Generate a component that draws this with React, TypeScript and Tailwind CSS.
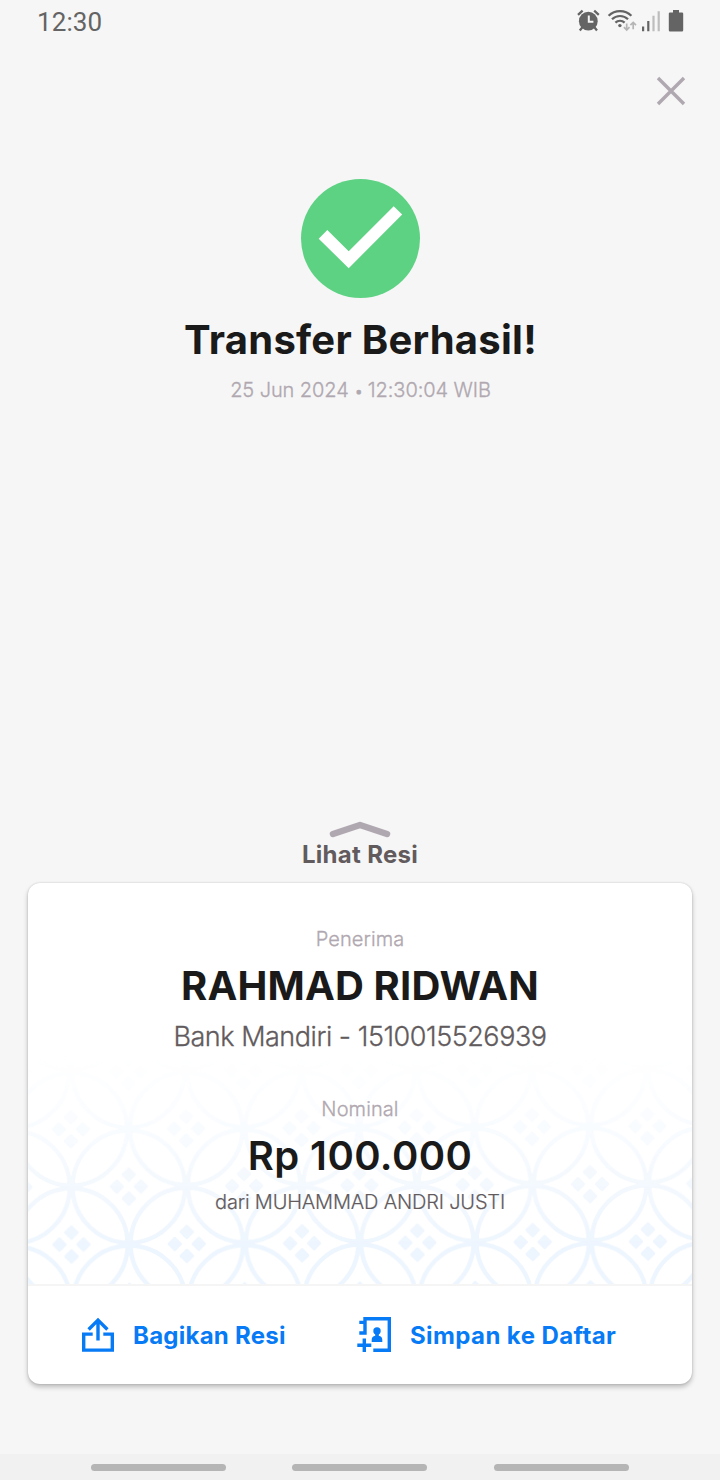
import type { ReactNode } from 'react';

interface TextRowProps {
  className: string;
  children: ReactNode;
}

const StatusIcons = () => (
  <svg className="h-8 w-[108px]" viewBox="577 0 108 32" fill="none">
    {/* Alarm */}
    <circle cx="588.3" cy="21.2" r="9.4" fill="#646464" />
    <path d="M588.8 15.5v6.3h4.6" stroke="#f5f5f5" strokeWidth="2" />
    <path
      d="M578 14.8l4.6-4.2M598.8 14.8l-4.6-4.2M582.6 27l-2.8 3.4M594.2 27l2.8 3.4"
      stroke="#646464"
      strokeWidth="2.3"
    />

    {/* Wifi */}
    <g stroke="#646464" strokeWidth="2.2">
      <path d="M608.6 15.8a16.4 16.4 0 0 1 22.8 0" />
      <path d="M612 19.3a11.4 11.4 0 0 1 16 0" />
      <path d="M615.4 22.6a6.6 6.6 0 0 1 9.2 0" />
    </g>
    <circle cx="619.9" cy="25.6" r="1.7" fill="#646464" />
    <g stroke="#b5b5b5" strokeWidth="1.7">
      <path d="M626.7 23.5v6.3M623.9 27.2l2.8 2.8 2.8-2.8" />
      <path d="M633.2 29.2v-6.6M630.4 25.2l2.8-2.8 2.8 2.8" />
    </g>

    {/* Signal */}
    <path d="M642 26.5h2.2v4.8H642zM647.2 21h2.2v10.3h-2.2z" fill="#646464" />
    <path d="M652.4 15.8h2.2v15.5h-2.2zM657.6 11.2h2.2v20.1h-2.2z" fill="#bdbdbd" />

    {/* Battery */}
    <path
      d="M673 10h6v2.4h3a1.2 1.2 0 0 1 1.2 1.2v16.6a1.2 1.2 0 0 1-1.2 1.2h-12a1.2 1.2 0 0 1-1.2-1.2V13.6a1.2 1.2 0 0 1 1.2-1.2h3z"
      fill="#646464"
    />
  </svg>
);

const CloseIcon = () => (
  <svg className="size-8" viewBox="0 0 32 32" stroke="#b0a8b0" strokeWidth="3.4">
    <path d="M3 3l26 26M29 3L3 29" />
  </svg>
);

const SuccessIcon = () => (
  <svg className="size-[119px]" viewBox="0 0 119 119">
    <circle cx="59.5" cy="59.5" r="59.5" fill="#5dd283" />
    <path d="M17.7 59.7l8.6-8.7 21.4 21.2L92.7 27.2l8.5 8.3-53.5 53.7z" fill="#fff" />
  </svg>
);

const ShareIcon = () => (
  <svg className="size-9" viewBox="0 0 36 36" fill="none" stroke="#077bf5" strokeWidth="3.4">
    <path d="M12.7 17.1H3.7v16h28.6v-16h-9" />
    <path d="M18 23.5V2.5M8.6 12.5L18 3.1l9.4 9.4" />
  </svg>
);

const ContactIcon = () => (
  <svg className="size-9" viewBox="0 0 36 36" fill="none" stroke="#077bf5" strokeWidth="3.4">
    <path d="M2.3 5.4h6M2.3 16h5.7M8 17.7V1.7h24.3v31.6H16.3" />
    <path d="M.3 28.2h14M7.3 21.5v13.4" />
    <g fill="#077bf5" stroke="none">
      <circle cx="20" cy="14" r="3.7" />
      <path d="M18.2 16.5h3.6v2.2c2.2.4 3.5 1.8 3.5 4V25H14.7v-2.3c0-2.2 1.3-3.6 3.5-4z" />
    </g>
  </svg>
);

/** Interlaced circles that fade out towards the top of the card */
const BatikPattern = () => (
  <svg className="absolute bottom-0 left-0 h-[230px] w-full" viewBox="28 1054 664 230">
    <defs>
      <pattern
        id="batik"
        width="115.3"
        height="115.3"
        patternUnits="userSpaceOnUse"
        patternTransform="translate(71.5 1244.5) rotate(-0.3)"
      >
        <g fill="none" stroke="#edf5fe" strokeWidth="4.4">
          <circle cx="57.65" cy="57.65" r="56.2" />
          <circle cx="0" cy="0" r="56.2" />
          <circle cx="115.3" cy="0" r="56.2" />
          <circle cx="0" cy="115.3" r="56.2" />
          <circle cx="115.3" cy="115.3" r="56.2" />
        </g>
        <g fill="#edf5fe">
          {[
            [57.65, 57.65],
            [0, 0],
            [115.3, 0],
            [0, 115.3],
            [115.3, 115.3],
          ].map(([x, y]) => (
            <g key={`${x}-${y}`} transform={`translate(${x} ${y}) rotate(45)`}>
              <rect x="-14" y="-14" width="11" height="11" rx="1.5" />
              <rect x="3" y="-14" width="11" height="11" rx="1.5" />
              <rect x="-14" y="3" width="11" height="11" rx="1.5" />
              <rect x="3" y="3" width="11" height="11" rx="1.5" />
            </g>
          ))}
        </g>
      </pattern>
      <linearGradient id="fade" x1="0" y1="0" x2="0" y2="1">
        <stop offset="0" stopColor="#fff" stopOpacity="0" />
        <stop offset="0.33" stopColor="#fff" stopOpacity="0.34" />
        <stop offset="0.85" stopColor="#fff" />
      </linearGradient>
      <mask id="fadeMask" className="[mask-type:alpha]">
        <rect x="28" y="1054" width="664" height="230" fill="url(#fade)" />
      </mask>
    </defs>
    <rect x="28" y="1054" width="664" height="230" fill="url(#batik)" mask="url(#fadeMask)" />
  </svg>
);

const TextRow = ({ className, children }: TextRowProps) => (
  <p className={`whitespace-nowrap text-center ${className}`}>{children}</p>
);

const App = () => {
  return (
    <div className="flex h-[1480px] w-[720px] flex-col overflow-hidden bg-[#f6f6f6] font-['Inter',sans-serif]">
      {/* Status bar */}
      <div className="flex h-11 items-start justify-between pl-[37px] pr-[35px]">
        <span className="font-['Roboto',sans-serif] text-[26px] leading-[44px] tracking-[0.1px] text-[#646464]">
          12:30
        </span>
        <StatusIcons />
      </div>

      <div className="flex h-[135px] justify-end pr-[33px] pt-[31px]">
        <button className="size-8" aria-label="Tutup">
          <CloseIcon />
        </button>
      </div>

      {/* Result */}
      <div className="flex flex-col items-center pl-px">
        <SuccessIcon />
        <h1 className="mt-[18px] whitespace-nowrap text-[40px] font-bold leading-[48px] tracking-[0.25px] text-[#1a1a1a]">
          Transfer Berhasil!
        </h1>
        <TextRow className="mt-[14px] text-[20px] font-light leading-6 tracking-[-0.08px] text-[#b0a8b0] [-webkit-text-stroke:0.3px]">
          25 Jun 2024 <span className="inline-block w-2 text-center text-[16px] leading-none">•</span> 12:30:04 WIB
        </TextRow>
      </div>

      {/* Receipt handle */}
      <div className="mt-auto flex flex-col items-center">
        <svg className="h-5 w-16" viewBox="0 0 64 20" fill="none">
          <path
            d="M5 15L32 6l27 9"
            stroke="#b0a8b0"
            strokeWidth="6.5"
            strokeLinecap="round"
            strokeLinejoin="round"
          />
        </svg>
        <TextRow className="mt-[2px] text-[24px] font-bold leading-7 tracking-[0.3px] text-[#625b5d]">Lihat Resi</TextRow>
      </div>

      {/* Card */}
      <div className="mx-7 mb-[70px] mt-[14px] h-[501px] shrink-0 overflow-hidden rounded-xl bg-white shadow-[0_3px_5px_rgba(0,0,0,0.24),0_0_2px_rgba(0,0,0,0.18)]">
        <div className="relative h-[401px]">
          <BatikPattern />
          <div className="relative pt-[44px]">
            <TextRow className="text-[20px] font-light leading-6 tracking-[0.1px] text-[#b0a8b0] [-webkit-text-stroke:0.3px]">
              Penerima
            </TextRow>
            <TextRow className="mt-[11px] text-[40px] font-bold leading-[48px] tracking-[0.15px] text-[#1a1a1a]">
              RAHMAD RIDWAN
            </TextRow>
            <TextRow className="mt-[11px] text-[27px] font-light leading-8 tracking-[-0.47px] text-[#625b5d] [-webkit-text-stroke:0.3px]">
              Bank Mandiri - 1510015526939
            </TextRow>
            <TextRow className="mt-[44px] text-[20px] font-light leading-6 tracking-[0.1px] text-[#b0a8b0] [-webkit-text-stroke:0.3px]">
              Nominal
            </TextRow>
            <TextRow className="mt-[11px] text-[40px] font-semibold leading-[48px] tracking-[0.4px] text-[#1a1a1a]">
              Rp 100.000
            </TextRow>
            <TextRow className="mt-[10px] text-[20px] font-light leading-6 tracking-[-0.18px] text-[#625b5d] [-webkit-text-stroke:0.2px]">
              dari MUHAMMAD ANDRI JUSTI
            </TextRow>
          </div>
        </div>
        <div className="flex h-[100px] items-center border-t-2 border-[#f5f5f5] pl-[52px] text-[24px] font-bold text-[#077bf5]">
          <button className="flex w-[277px] items-center gap-[17px]">
            <ShareIcon />
            <span className="whitespace-nowrap pt-[2px] tracking-[0.25px]">Bagikan Resi</span>
          </button>
          <button className="flex items-center gap-[17px]">
            <ContactIcon />
            <span className="whitespace-nowrap pt-[2px] tracking-[0.4px]">Simpan ke Daftar</span>
          </button>
        </div>
      </div>

      {/* Navigation bar */}
      <div className="flex h-[26px] shrink-0 items-center bg-[#f1f1f1] pl-[91px]">
        <span className="mr-[66px] h-[7px] w-[135px] rounded-full bg-[#b5b5b5]" />
        <span className="mr-[67px] h-[7px] w-[135px] rounded-full bg-[#b5b5b5]" />
        <span className="h-[7px] w-[135px] rounded-full bg-[#b5b5b5]" />
      </div>
    </div>
  );
};

export default App;
